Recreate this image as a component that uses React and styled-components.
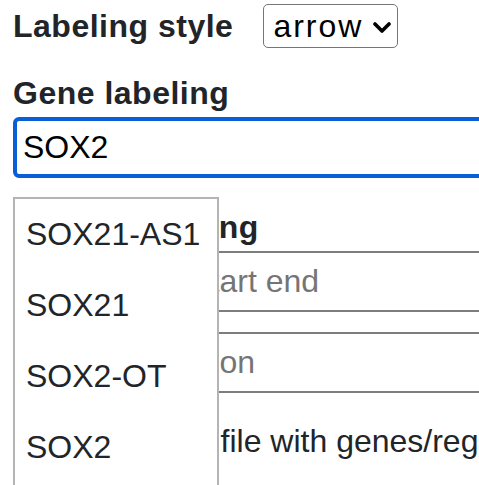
import styled, { createGlobalStyle } from 'styled-components';

const GlobalStyle = createGlobalStyle`
  html, body {
    margin: 0;
    padding: 0;
    background: #fff;
    overflow: hidden;
  }
  body {
    font-family: "Liberation Sans", Arial, sans-serif;
    color: #212529;
  }
`;

const Page = styled.div`
  width: 720px;
  padding: 4px 0 0 13px;
  box-sizing: border-box;
`;

const StyleRow = styled.div`
  display: flex;
  align-items: baseline;
  gap: 30px;
`;

const Heading = styled.div`
  font-size: 32px;
  line-height: 38px;
  font-weight: 700;
  letter-spacing: 0.5px;
  color: #212529;
  margin-top: ${(p) => p.$top || 0}px;
`;

const SelectBox = styled.div`
  display: inline-flex;
  align-items: center;
  gap: 10px;
  height: 44px;
  box-sizing: border-box;
  padding: 0 6px 0 9px;
  border: 1px solid #767676;
  border-radius: 5px;
  font-size: 32px;
  letter-spacing: 2px;
  color: #000;
  svg {
    margin-top: 2px;
  }
`;

const Field = styled.div`
  position: relative;
  margin-top: ${(p) => p.$top || 0}px;
`;

const TextInput = styled.input`
  display: block;
  width: 640px;
  height: 61px;
  box-sizing: border-box;
  margin: 0;
  padding: 0 0 0 ${(p) => (p.$focused ? 6 : 7)}px;
  border: ${(p) => (p.$focused ? '4px solid #0a5fd6' : '2px solid #7d7d7d')};
  border-radius: 6px;
  font-family: "Liberation Sans", Arial, sans-serif;
  font-size: 32px;
  color: #000;
  background: #fff;
  outline: none;
  &::placeholder {
    color: #757575;
  }
`;

const Suggestions = styled.ul`
  position: absolute;
  top: calc(100% + 19px);
  left: 0;
  z-index: 10;
  width: 206px;
  height: 292px;
  box-sizing: border-box;
  margin: 0;
  padding: 0;
  list-style: none;
  background: #fff;
  border: 2px solid #b4b4b4;
  border-bottom: none;
`;

const Suggestion = styled.li`
  height: 71px;
  line-height: 71px;
  padding-left: 11px;
  font-size: 32px;
  color: #212529;
  white-space: nowrap;
`;

const Note = styled.p`
  margin: 19px 0 0;
  font-size: 32px;
  line-height: 58px;
  color: #212529;
  width: 640px;
`;

const Chevron = () => (
  <svg width="18" height="11" viewBox="0 0 18 11">
    <path d="M2 2l7 7 7-7" fill="none" stroke="#000" strokeWidth="3.6" strokeLinecap="round" strokeLinejoin="round" />
  </svg>
);

const genes = ['SOX21-AS1', 'SOX21', 'SOX2-OT', 'SOX2'];

export default function App() {
  return (
    <Page>
      <GlobalStyle />
      <StyleRow>
        <Heading>Labeling style</Heading>
        <SelectBox>
          arrow
          <Chevron />
        </SelectBox>
      </StyleRow>

      <Heading $top={26}>Gene labeling</Heading>
      <Field $top={5}>
        <TextInput $focused defaultValue="SOX2" readOnly />
        <Suggestions>
          {genes.map((g) => (
            <Suggestion key={g}>{g}</Suggestion>
          ))}
        </Suggestions>
      </Field>

      <Heading $top={30}>Region labeling</Heading>
      <Field $top={5}>
        <TextInput placeholder="Region: chr start end" readOnly />
      </Field>
      <Field $top={20}>
        <TextInput placeholder="Extra annotation" readOnly />
      </Field>

      <Note>
        Upload a TSV file with genes/regions to label, one per line in a plain
        text file
      </Note>
    </Page>
  );
}
